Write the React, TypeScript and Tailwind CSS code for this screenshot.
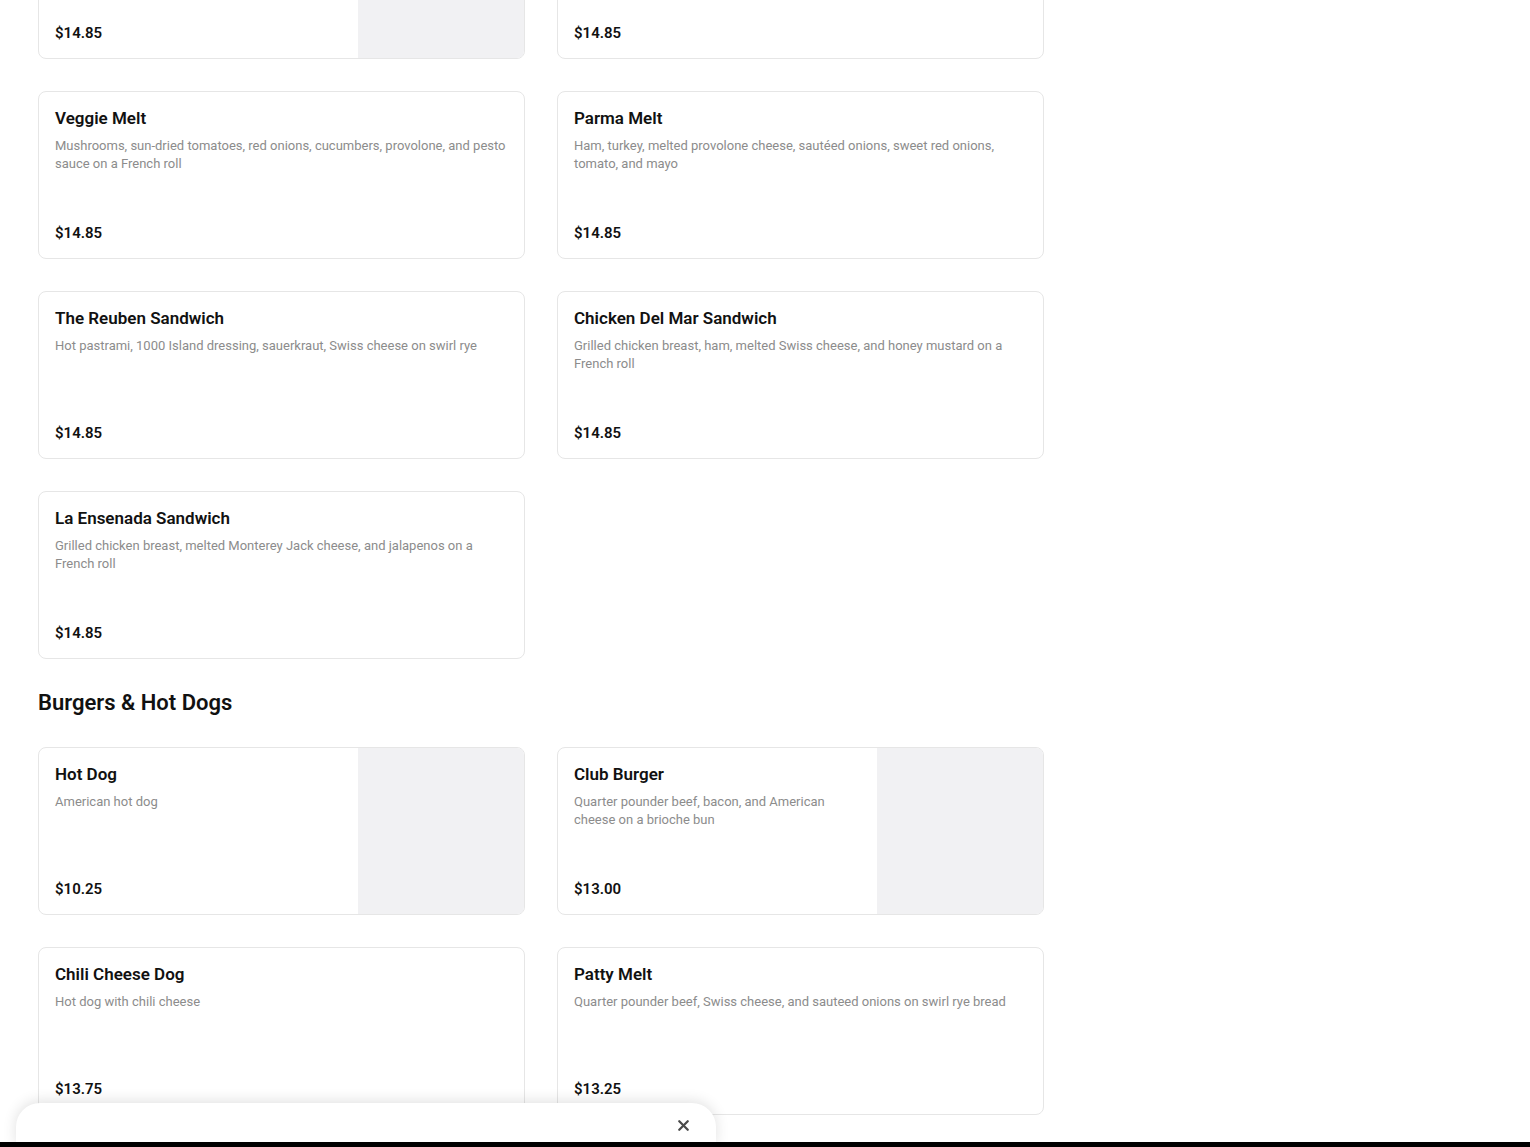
import React from 'react';
import { X } from 'lucide-react';

interface MenuItem {
  name?: string;
  description?: string;
  price: string;
  image?: boolean;
}

const sandwiches: MenuItem[] = [
  { name: 'Club Sandwich', description: 'Turkey, ham, bacon, lettuce and tomato', price: '$14.85', image: true },
  { name: 'Turkey Melt', description: 'Turkey and melted cheese on a French roll', price: '$14.85' },
  {
    name: 'Veggie Melt',
    description: 'Mushrooms, sun-dried tomatoes, red onions, cucumbers, provolone, and pesto sauce on a French roll',
    price: '$14.85',
  },
  {
    name: 'Parma Melt',
    description: 'Ham, turkey, melted provolone cheese, sautéed onions, sweet red onions, tomato, and mayo',
    price: '$14.85',
  },
  {
    name: 'The Reuben Sandwich',
    description: 'Hot pastrami, 1000 Island dressing, sauerkraut, Swiss cheese on swirl rye',
    price: '$14.85',
  },
  {
    name: 'Chicken Del Mar Sandwich',
    description: 'Grilled chicken breast, ham, melted Swiss cheese, and honey mustard on a French roll',
    price: '$14.85',
  },
  {
    name: 'La Ensenada Sandwich',
    description: 'Grilled chicken breast, melted Monterey Jack cheese, and jalapenos on a French roll',
    price: '$14.85',
  },
];

const burgers: MenuItem[] = [
  { name: 'Hot Dog', description: 'American hot dog', price: '$10.25', image: true },
  {
    name: 'Club Burger',
    description: 'Quarter pounder beef, bacon, and American cheese on a brioche bun',
    price: '$13.00',
    image: true,
  },
  { name: 'Chili Cheese Dog', description: 'Hot dog with chili cheese', price: '$13.75' },
  {
    name: 'Patty Melt',
    description: 'Quarter pounder beef, Swiss cheese, and sauteed onions on swirl rye bread',
    price: '$13.25',
  },
  { name: 'Bacon Cheeseburger', description: 'Quarter pounder beef, bacon, and cheddar cheese', price: '$13.50' },
  { name: 'Veggie Burger', description: 'Garden patty with lettuce, tomato and onion', price: '$12.75' },
];

function ItemCard({ item }: { item: MenuItem }) {
  return (
    <div className="flex h-[168px] overflow-hidden rounded-lg border border-[#e6e6e6] bg-white">
      <div className="flex min-w-0 flex-1 flex-col justify-between px-4 pt-4 pb-[15px]">
        <div>
          <h3 className="text-[17px] font-semibold leading-5 text-[#111]">{item.name}</h3>
          <p className="mt-[9px] text-[13px] leading-[18px] text-[#8c8c8c]">{item.description}</p>
        </div>
        <div className="text-[15px] font-semibold leading-5 text-[#111]">{item.price}</div>
      </div>
      {item.image && <div className="w-[166px] shrink-0 bg-[#f1f1f3]" />}
    </div>
  );
}

export default function App() {
  return (
    <div className="relative h-[1147px] overflow-hidden bg-white font-['Roboto','Liberation_Sans',sans-serif]">
      <div className="-mt-[109px] ml-[38px] w-[1006px]">
        {/* Sandwiches */}
        <div className="grid grid-cols-2 gap-8">
          {sandwiches.map((item) => (
            <ItemCard key={item.name} item={item} />
          ))}
        </div>

        {/* Burgers & Hot Dogs */}
        <h2 className="mt-[30px] mb-[30px] text-[22px] font-semibold leading-7 text-[#111]">Burgers &amp; Hot Dogs</h2>
        <div className="grid grid-cols-2 gap-8">
          {burgers.map((item) => (
            <ItemCard key={item.name} item={item} />
          ))}
        </div>
      </div>

      {/* Bottom sheet */}
      <div className="absolute bottom-0 left-4 h-[44px] w-[700px] rounded-t-3xl bg-white shadow-[0_-2px_14px_rgba(0,0,0,0.12)]">
        <div className="flex justify-end pt-[14px] pr-[24px]">
          <X className="h-[17px] w-[17px] text-[#4a4a4a]" strokeWidth={3.2} />
        </div>
      </div>
      <div className="absolute bottom-0 left-0 h-[5px] w-full bg-black" />
    </div>
  );
}
